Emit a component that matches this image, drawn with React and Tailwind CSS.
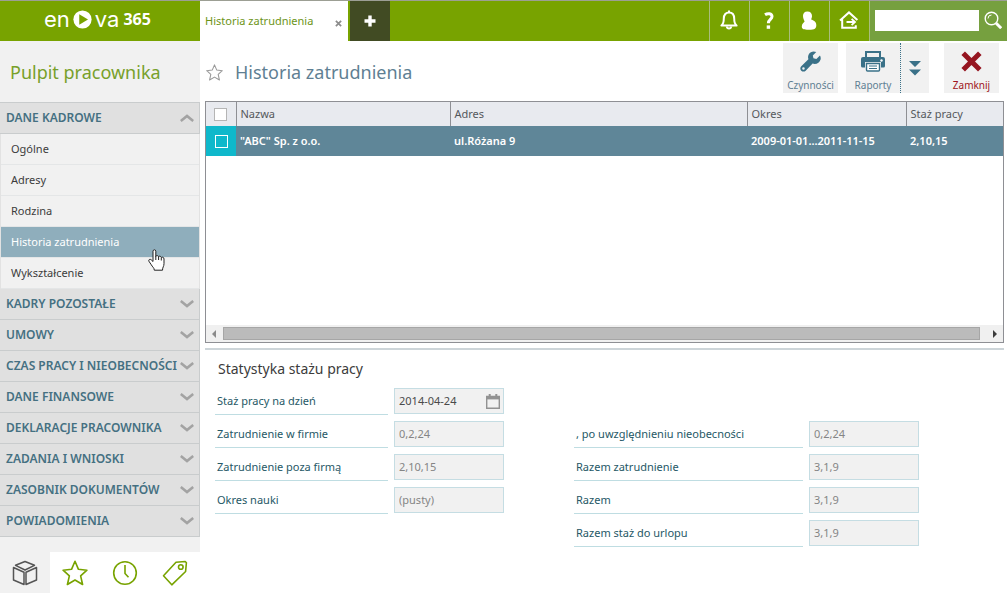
import React, { useState } from "react";
import clsx from "clsx";

const personalLinks = [
  "Ogólne",
  "Adresy",
  "Rodzina",
  "Historia zatrudnienia",
  "Wykształcenie",
];

const closedGroups = [
  "KADRY POZOSTAŁE",
  "UMOWY",
  "CZAS PRACY I NIEOBECNOŚCI",
  "DANE FINANSOWE",
  "DEKLARACJE PRACOWNIKA",
  "ZADANIA I WNIOSKI",
  "ZASOBNIK DOKUMENTÓW",
  "POWIADOMIENIA",
];

const leftFields = [
  { id: "day", label: "Staż pracy na dzień", value: "2014-04-24", date: true },
  { id: "company", label: "Zatrudnienie w firmie", value: "0,2,24" },
  { id: "outside", label: "Zatrudnienie poza firmą", value: "2,10,15" },
  { id: "school", label: "Okres nauki", value: "(pusty)" },
];

const rightFields = [
  { id: "absence", label: ", po uwzględnieniu nieobecności", value: "0,2,24" },
  { id: "employment", label: "Razem zatrudnienie", value: "3,1,9" },
  { id: "total", label: "Razem", value: "3,1,9" },
  { id: "leave", label: "Razem staż do urlopu", value: "3,1,9" },
];

const StarIcon = ({ className }) => (
  <svg viewBox="0 0 24 24" className={className} fill="none" stroke="currentColor" strokeLinejoin="round">
    <path d="M12 1.2 15.2 8.6 23 9.4 17.2 14.7 19 22.6 12 18.5 5 22.6 6.8 14.7 1 9.4 8.8 8.6Z" />
  </svg>
);

const Chevron = ({ up }) => (
  <svg viewBox="0 0 14 8" className="w-3.5 h-2 shrink-0" fill="none" stroke="#a3a3a3" strokeWidth="2.6">
    <path d={up ? "M.8 7 7 2l6.2 5" : "M.8 1 7 6l6.2-5"} />
  </svg>
);

const Logo = () => (
  <a href="#home" className="w-[200px] h-full flex items-center pl-11 pb-1 text-white font-['Inter',sans-serif]">
    <span className="text-[22px] leading-8">en</span>
    <svg viewBox="0 0 20 20" className="w-[19px] h-[19px] mx-[3px]">
      <circle cx="10" cy="10" r="9.6" fill="#fff" />
      <path d="M6.6 4.4v11.2L15.8 10z" fill="#78a300" />
    </svg>
    <span className="text-[22px] leading-8 mr-1">va</span>
    <span className="text-base leading-8 font-bold font-['Noto_Sans',sans-serif]">365</span>
  </a>
);

const HeaderButton = ({ title, children }) => (
  <button
    type="button"
    title={title}
    className="w-10 h-full flex items-center justify-center pb-0.5 pr-0.5 border-l border-[#a9bd7c] text-white"
  >
    {children}
  </button>
);

const Header = () => (
  <header className="h-[41px] flex bg-[#78a300] border-t border-[#9c9f94]">
    <Logo />
    <div className="w-[148px] bg-white flex items-center justify-between pl-[5px] pr-1.5">
      <a href="#history" className="text-[11px] text-[#6d9418]">
        Historia zatrudnienia
      </a>
      <button type="button" title="Zamknij kartę" className="mt-1">
        <svg viewBox="0 0 8 8" className="w-[7px] h-[7px]" stroke="#8c8c8c" strokeWidth="2">
          <path d="m1 1 6 6M7 1 1 7" />
        </svg>
      </button>
    </div>
    <button
      type="button"
      title="Nowa karta"
      className="w-10 ml-0.5 bg-[#414b23] text-white flex items-center justify-center"
    >
      <svg viewBox="0 0 12 12" className="w-3 h-3" stroke="currentColor" strokeWidth="3.4">
        <path d="M6 .5v11M.5 6h11" />
      </svg>
    </button>

    <div className="ml-auto flex">
      <HeaderButton title="Powiadomienia">
        <svg viewBox="0 0 18 20" className="w-[18px] h-5" fill="none" stroke="currentColor" strokeWidth="2">
          <path d="M1.4 15.6c2.2-1.6 2.4-3.6 2.4-7C3.8 4.600 6 2.400 9 2.400s5.200 2.200 5.200 6.200c0 3.400.2 5.400 2.400 7Z" strokeLinejoin="round" />
          <path d="M9 .5v2M6.800 16.500c.3 2.600 4.100 2.600 4.400 0" />
        </svg>
      </HeaderButton>
      <HeaderButton title="Pomoc">
        <svg viewBox="0 0 10 17" className="w-2.5 h-[17px]" fill="none" stroke="currentColor" strokeWidth="3">
          <path d="M1 2.800C3.600 1 8 1.200 8 4.600c0 2.800-3.600 3-3.600 6.600" />
          <path d="M4.400 13.400v3.400" strokeWidth="3.400" />
        </svg>
      </HeaderButton>
      <HeaderButton title="Profil">
        <svg viewBox="0 0 16 19" className="w-4 h-[19px]" fill="currentColor">
          <path d="M6.400.4c3 0 4.600 1.900 4.600 4.500 0 1.700-.7 2.600-.9 3.700 2.400.9 5.200 2 5.200 5.400 0 3.600-1.400 4.700-7.300 4.700S.8 17.800.8 15.400c0-2.600 1.800-3.400 2.800-4.800C3.200 9 2 7.600 2 5 2 2.300 3.500.4 6.400.4Z" />
        </svg>
      </HeaderButton>
      <HeaderButton title="Wyloguj">
        <svg viewBox="0 0 20 18" className="w-5 h-[18px]" fill="none" stroke="currentColor" strokeWidth="2">
          <path d="M1 9.600 10 1.400l8.400 7.600M3.200 7.800v9h13.600v-2.600" />
          <path d="M7.500 11h8M12.600 7.800l3.400 3.200-3.400 3.200" strokeWidth="1.800" />
        </svg>
      </HeaderButton>
      <form
        className="flex items-center pb-0.5 px-[5px] bg-[#76a03f] border-l border-[#a9bd7c]"
        onSubmit={(e) => e.preventDefault()}
      >
        <input type="search" aria-label="Szukaj" className="w-[104px] h-[21px] bg-white px-1 text-xs outline-none" />
        <button type="submit" title="Szukaj" className="pl-[5px] text-white">
          <svg viewBox="0 0 18 18" className="w-[18px] h-[18px]" fill="none" stroke="currentColor">
            <circle cx="7.500" cy="7.500" r="6.300" strokeWidth="1.400" />
            <path d="M4 7.500A3.500 3.500 0 0 1 7.500 4" strokeWidth="1" />
            <path d="m12.200 12.200 5 5" strokeWidth="3" />
          </svg>
        </button>
      </form>
    </div>
  </header>
);

const HandCursor = () => (
  <svg viewBox="0 0 17 22" className="absolute left-[147px] top-[22px] z-10 w-[17px] h-[22px] pointer-events-none">
    <path
      d="M5 12.500V2.200C5 .3 7.800.3 7.800 2.200v5.200c.4-1.300 2.600-1 2.800.4.600-1.100 2.500-.7 2.700.8.700-.9 2.700-.6 2.700 1.400v4.600c0 3-1.500 3.400-1.500 6.600H6.300c0-2.400-2-3.400-3-5.400L.9 12.200c-.7-1.600 1.200-2.600 2.400-1.300Z"
      fill="#fff"
      stroke="#222"
      strokeWidth="1"
    />
    <path d="M7.800 7v4M10.600 8v3M13.300 9v2.500" stroke="#222" fill="none" />
  </svg>
);

const GroupHeader = ({ label, open }) => (
  <button
    type="button"
    aria-expanded={!!open}
    className="w-full h-[31px] flex items-center justify-between pl-1.5 pr-[5px] bg-[#e0e0e0] border-b border-r border-[#c9cccd] text-xs font-semibold text-[#457082] whitespace-nowrap"
  >
    {label}
    <Chevron up={open} />
  </button>
);

const SideTabs = () => (
  <div className="h-[41px] grid grid-cols-4 bg-white text-[#78a300]">
    <button type="button" title="Moduły" className="flex items-center justify-center bg-[#f1f1f1] text-[#555]">
      <svg viewBox="0 0 26 26" className="w-[26px] h-[26px]" fill="none" stroke="currentColor" strokeWidth="1.500" strokeLinejoin="round">
        <path d="M13 1.500 22.500 5.300 13 10 3.500 5.300Z" />
        <path d="M1.500 7.500 12 12.200v12.300L1.500 20ZM24.500 7.500 14 12.200v12.300L24.500 20Z" />
      </svg>
    </button>
    <button type="button" title="Ulubione" className="flex items-center justify-center">
      <StarIcon className="w-[26px] h-[26px] stroke-[1.5]" />
    </button>
    <button type="button" title="Historia" className="flex items-center justify-center">
      <svg viewBox="0 0 26 26" className="w-[26px] h-[26px]" fill="none" stroke="currentColor" strokeWidth="1.600">
        <circle cx="13" cy="13" r="11.300" />
        <path d="M13 5v8.500l3.500 3.800" />
      </svg>
    </button>
    <button type="button" title="Etykiety" className="flex items-center justify-center">
      <svg viewBox="0 0 26 26" className="w-[26px] h-[26px]" fill="none" stroke="currentColor" strokeWidth="1.600" strokeLinejoin="round">
        <path d="M14 2.200 23.200 1.500l1.200 1.300-.8 8.700L9.800 24.800 1.500 15.800Z" />
        <circle cx="18.800" cy="7" r="2.300" />
      </svg>
    </button>
  </div>
);

const Sidebar = () => (
  <aside className="w-[200px] shrink-0 flex flex-col bg-[#f1f1f1]">
    <h1 className="h-[62px] flex items-center pl-2.5 text-lg text-[#78a02a] border-b border-[#c9cccd]">
      Pulpit pracownika
    </h1>
    <nav>
      <GroupHeader label="DANE KADROWE" open />
      <ul className="border-l border-r border-[#e2e2e2]">
        {personalLinks.map((label) => {
          const active = label === "Historia zatrudnienia";
          return (
            <li key={label} className="relative">
              <a
                href="#history"
                className={clsx(
                  "h-[31px] flex items-center pl-2.5 text-[11px] border-b border-[#e4e6e7]",
                  active ? "bg-[#8faebc] text-white" : "text-[#3c3c3c]"
                )}
              >
                {label}
              </a>
              {active && <HandCursor />}
            </li>
          );
        })}
      </ul>
      {closedGroups.map((label) => (
        <GroupHeader key={label} label={label} />
      ))}
    </nav>
    <div className="mt-auto">
      <SideTabs />
    </div>
  </aside>
);

const toolButton =
  "w-[55px] h-[50px] flex flex-col items-center justify-between pt-2 bg-[#f1f1f1] text-[10px]";

const Toolbar = () => (
  <div className="ml-auto flex">
    <button type="button" className={clsx(toolButton, "text-[#5f7f93]")}>
      <svg viewBox="0 0 20 20" className="w-[21px] h-[21px]" fill="#3a7188">
        <path d="M19 4.200 15.600 7.600 12.800 7 12.200 4.300 15.500.9C12.800-.2 9.800.6 8.400 3 7.500 4.600 7.500 6.300 8 7.800L1.200 14.500C0 15.800 0 17.500 1.200 18.700c1.200 1.200 3 1.200 4.200 0L12 12c3.400 1 6.800-.8 7.600-4 .3-1.300.1-2.700-.6-3.800ZM3.300 17.800a1.200 1.200 0 1 1 0-2.400 1.200 1.200 0 0 1 0 2.400Z" />
      </svg>
      Czynności
    </button>
    <div className="flex ml-2">
      <button type="button" className={clsx(toolButton, "text-[#5f7f93] border-r border-dotted border-[#3a7188]")}>
        <svg viewBox="0 0 24 21" className="w-6 h-[21px]" fill="none">
          <path d="M5 6V1h14v5" stroke="#3a7188" strokeWidth="2" />
          <path d="M2 6h20a2 2 0 0 1 2 2v7a1.500 1.500 0 0 1-1.500 1.500H1.500A1.500 1.500 0 0 1 0 15V8a2 2 0 0 1 2-2Z" fill="#3a7188" />
          <path d="M5 12h14v8H5Z" fill="#fff" stroke="#f1f1f1" strokeWidth="2" />
          <path d="M5.500 12.500h13V19q0 1-1 1h-11q-1 0-1-1Z" fill="#fff" stroke="#3a7188" strokeWidth="1.400" />
          <path d="M8 15h8M8 17.500h8" stroke="#3a7188" />
          <circle cx="20.500" cy="9.500" r="1.200" fill="#fff" />
        </svg>
        Raporty
      </button>
      <button type="button" title="Więcej" className="w-7 h-[50px] flex items-center justify-center bg-[#f1f1f1]">
        <svg viewBox="0 0 12 15" className="w-3 h-[15px]" fill="#3a7188">
          <path d="M0 0h12L6 6ZM0 8.500h12l-6 6Z" />
        </svg>
      </button>
    </div>
    <button type="button" className={clsx(toolButton, "ml-[15px] text-[#a01420]")}>
      <svg viewBox="0 0 21 21" className="w-[21px] h-[21px]" stroke="#951520" strokeWidth="5">
        <path d="m2.200 2.200 16.600 16.600M18.800 2.200 2.200 18.800" />
      </svg>
      Zamknij
    </button>
  </div>
);

const HistoryTable = () => {
  const [selected, setSelected] = useState(false);

  return (
    <div className="flex-1 flex flex-col justify-between min-h-[241px] ml-[5px] mr-[3px] border border-[#8e8f94]">
      <table className="w-full table-fixed border-collapse text-left text-[11px]">
        <colgroup>
          <col className="w-[30px]" />
          <col className="w-[214px]" />
          <col />
          <col className="w-[159px]" />
          <col className="w-[97px]" />
        </colgroup>
        <thead>
          <tr className="h-6 bg-[#e8eaef] text-[#55585c]">
            <th className="border-r border-[#8e8f94]">
              <input
                type="checkbox"
                aria-label="Zaznacz wszystko"
                className="block mx-auto appearance-none w-[13px] h-[13px] bg-white border border-[#b5b5b5]"
              />
            </th>
            <th className="pl-1 font-normal border-r border-[#8e8f94]">Nazwa</th>
            <th className="pl-1 font-normal border-r border-[#8e8f94]">Adres</th>
            <th className="pl-1 font-normal border-r border-[#8e8f94]">Okres</th>
            <th className="pl-1 font-normal">Staż pracy</th>
          </tr>
        </thead>
        <tbody>
          <tr className="h-[30px] bg-[#5f8698] text-white font-semibold">
            <td className="bg-[#0fb8cb]">
              <input
                type="checkbox"
                aria-label="Zaznacz wiersz"
                checked={selected}
                onChange={(e) => setSelected(e.target.checked)}
                className="block mx-auto appearance-none w-[13px] h-[13px] border border-white checked:bg-white"
              />
            </td>
            <td className="pl-1">"ABC" Sp. z o.o.</td>
            <td className="pl-1">ul.Różana 9</td>
            <td className="pl-1">2009-01-01...2011-11-15</td>
            <td className="pl-1">2,10,15</td>
          </tr>
        </tbody>
      </table>
      <div className="h-[17px] flex items-center bg-[#f0f0f0] px-1.5">
        <svg viewBox="0 0 4 8" className="w-1 h-2" fill="#8a8a8a">
          <path d="M4 0v8L0 4Z" />
        </svg>
        <div className="flex-1 h-[13px] ml-[7px] mr-[13px] bg-[#bbb] border border-[#a6a6a6]" />
        <svg viewBox="0 0 4 8" className="w-1 h-2" fill="#3c3c3c">
          <path d="M0 0v8l4-4Z" />
        </svg>
      </div>
    </div>
  );
};

const Field = ({ id, label, value, date, labelClass }) => (
  <div className="flex gap-1.5">
    <label
      htmlFor={id}
      className={clsx("h-[27px] flex items-center pl-0.5 text-[11px] text-[#265866] border-b border-[#bfdde2]", labelClass)}
    >
      {label}
    </label>
    <div className="w-[110px] h-[26px] flex items-center pl-1 pr-[3px] bg-[#f1f1f1] border border-[#c5dde3]">
      <input
        id={id}
        type="text"
        defaultValue={value}
        readOnly={!date}
        className={clsx("w-full min-w-0 bg-transparent text-[11px] outline-none", date ? "text-[#4a4a4a]" : "text-[#858585]")}
      />
      {date && (
        <button type="button" title="Kalendarz" className="shrink-0">
          <svg viewBox="0 0 14 15" className="w-3.5 h-[15px]" fill="none" stroke="#929292">
            <path d="M.7 2.500h12.600v11.800H.7Z" strokeWidth="1.400" />
            <path d="M.5 3.700h13" strokeWidth="3.400" />
            <path d="M3.700 0v3M10.300 0v3" strokeWidth="2" />
          </svg>
        </button>
      )}
    </div>
  </div>
);

const Statistics = () => (
  <section className="mt-[5px] ml-[5px] mr-[3px] border-t-2 border-[#cdd5d9] pb-[46px]">
    <h3 className="h-[38px] flex items-center pl-[13px] text-sm text-[#3c3c3c]">Statystyka stażu pracy</h3>
    <div className="flex gap-[70px] pl-2.5">
      <div className="flex flex-col gap-1.5">
        {leftFields.map((field) => (
          <Field key={field.id} {...field} labelClass="w-[173px]" />
        ))}
      </div>
      <div className="flex flex-col gap-1.5 pt-[33px]">
        {rightFields.map((field) => (
          <Field key={field.id} {...field} labelClass="w-[229px]" />
        ))}
      </div>
    </div>
  </section>
);

const App = () => {
  return (
    <div className="min-h-screen flex flex-col bg-white font-['Noto_Sans',sans-serif]">
      <Header />
      <div className="flex-1 flex">
        <Sidebar />
        <main className="flex-1 min-w-0 flex flex-col">
          <div className="h-[60px] flex items-start pt-0.5 pl-1.5 pr-2">
            <div className="flex items-center gap-3 h-[58px]">
              <button type="button" title="Dodaj do ulubionych" className="text-[#999]">
                <StarIcon className="w-[17px] h-[17px] stroke-[1.5]" />
              </button>
              <h2 className="text-lg text-[#5f7f93]">Historia zatrudnienia</h2>
            </div>
            <Toolbar />
          </div>
          <HistoryTable />
          <Statistics />
        </main>
      </div>
    </div>
  );
};

export default App;
